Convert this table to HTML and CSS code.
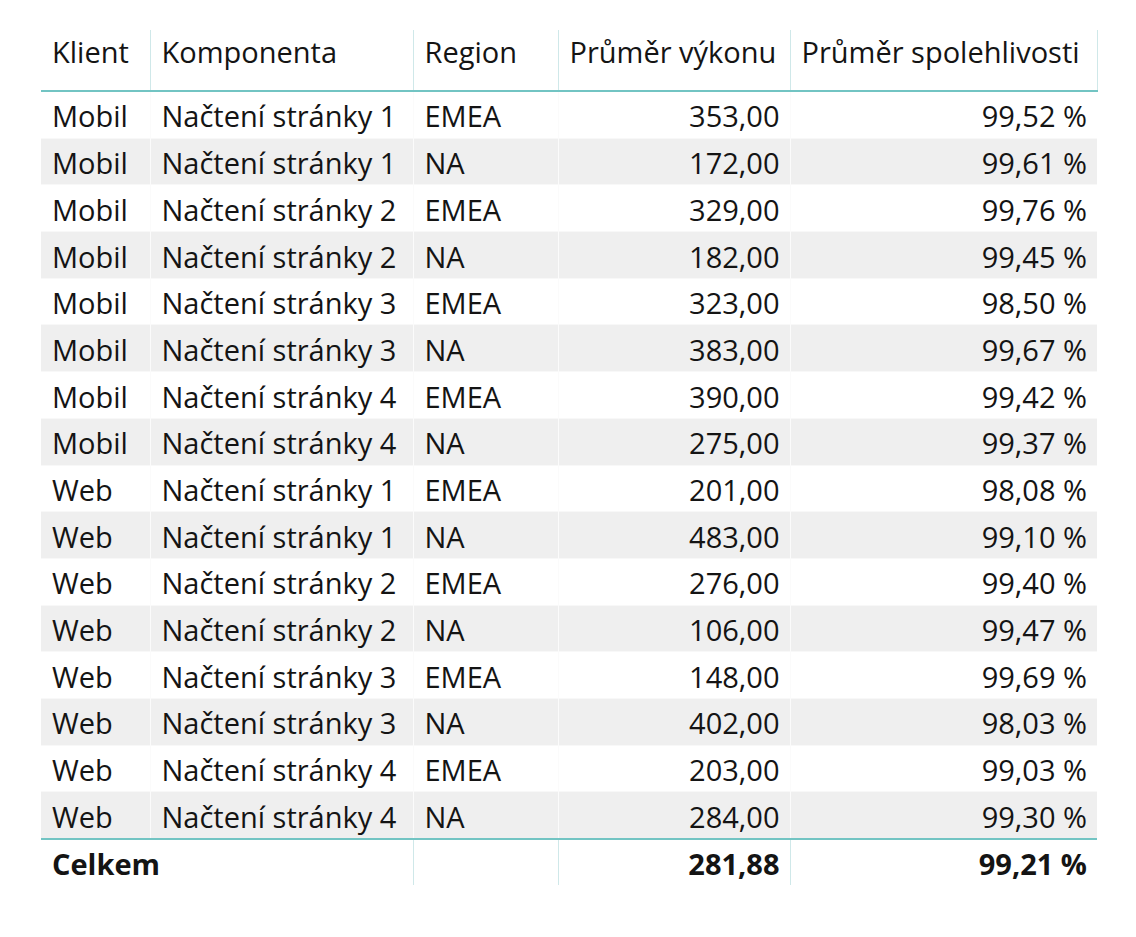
FILE: index.html
```html
<!DOCTYPE html>
<html lang="cs">
<head>
<meta charset="utf-8">
<link rel="stylesheet" href="styles.css">
</head>
<body>
<table class="grid">
  <colgroup>
    <col class="c1"><col class="c2"><col class="c3"><col class="c4"><col class="c5">
  </colgroup>
  <thead>
    <tr><th>Klient</th><th>Komponenta</th><th>Region</th><th>Průměr výkonu</th><th>Průměr spolehlivosti</th></tr>
  </thead>
  <tbody>
    <tr><td>Mobil</td><td>Načtení stránky 1</td><td>EMEA</td><td class="num">353,00</td><td class="num">99,52 %</td></tr>
    <tr><td>Mobil</td><td>Načtení stránky 1</td><td>NA</td><td class="num">172,00</td><td class="num">99,61 %</td></tr>
    <tr><td>Mobil</td><td>Načtení stránky 2</td><td>EMEA</td><td class="num">329,00</td><td class="num">99,76 %</td></tr>
    <tr><td>Mobil</td><td>Načtení stránky 2</td><td>NA</td><td class="num">182,00</td><td class="num">99,45 %</td></tr>
    <tr><td>Mobil</td><td>Načtení stránky 3</td><td>EMEA</td><td class="num">323,00</td><td class="num">98,50 %</td></tr>
    <tr><td>Mobil</td><td>Načtení stránky 3</td><td>NA</td><td class="num">383,00</td><td class="num">99,67 %</td></tr>
    <tr><td>Mobil</td><td>Načtení stránky 4</td><td>EMEA</td><td class="num">390,00</td><td class="num">99,42 %</td></tr>
    <tr><td>Mobil</td><td>Načtení stránky 4</td><td>NA</td><td class="num">275,00</td><td class="num">99,37 %</td></tr>
    <tr><td>Web</td><td>Načtení stránky 1</td><td>EMEA</td><td class="num">201,00</td><td class="num">98,08 %</td></tr>
    <tr><td>Web</td><td>Načtení stránky 1</td><td>NA</td><td class="num">483,00</td><td class="num">99,10 %</td></tr>
    <tr><td>Web</td><td>Načtení stránky 2</td><td>EMEA</td><td class="num">276,00</td><td class="num">99,40 %</td></tr>
    <tr><td>Web</td><td>Načtení stránky 2</td><td>NA</td><td class="num">106,00</td><td class="num">99,47 %</td></tr>
    <tr><td>Web</td><td>Načtení stránky 3</td><td>EMEA</td><td class="num">148,00</td><td class="num">99,69 %</td></tr>
    <tr><td>Web</td><td>Načtení stránky 3</td><td>NA</td><td class="num">402,00</td><td class="num">98,03 %</td></tr>
    <tr><td>Web</td><td>Načtení stránky 4</td><td>EMEA</td><td class="num">203,00</td><td class="num">99,03 %</td></tr>
    <tr><td>Web</td><td>Načtení stránky 4</td><td>NA</td><td class="num">284,00</td><td class="num">99,30 %</td></tr>
  </tbody>
  <tfoot>
    <tr><td colspan="2">Celkem</td><td></td><td class="num">281,88</td><td class="num last">99,21 %</td></tr>
  </tfoot>
</table>
</body>
</html>
```

FILE: styles.css
```css
html, body {
  margin: 0;
  background: #ffffff;
}
body {
  padding: 30px 0 0 41px;
  font-family: "Open Sans", "Noto Sans", sans-serif;
  color: #141414;
}
.grid {
  border-collapse: collapse;
  table-layout: fixed;
  width: 1056px;
  font-size: 29px;
  line-height: 1.2;
}
.c1 { width: 109px; }
.c2 { width: 263px; }
.c3 { width: 145px; }
.c4 { width: 232px; }
.c5 { width: 307px; }

.grid th, .grid td {
  padding: 0 10px 0 11px;
  white-space: nowrap;
  overflow: visible;
  font-weight: 400;
  text-align: left;
}
.grid .num { text-align: right; }

.grid thead th {
  height: 44px;
  padding-bottom: 16px;
  border-right: 1px solid #cfe8e9;
  border-bottom: 2px solid #72c4c3;
}

.grid tbody td {
  height: 41.7px;
  padding-top: 4px;
  border-top: 1px solid #f8f8f8;
  border-right: 1px solid #fbfbfb;
}
.grid tbody tr:first-child td { border-top: none; }
.grid tbody tr:nth-child(even) td { background: #efefef; }
.grid tbody tr:last-child td { border-bottom: 2px solid #72c4c3; }
.grid tbody td:last-child { border-right: none; }

.grid tfoot td {
  height: 42px;
  padding-top: 3px;
  font-weight: 700;
  border-right: 1px solid #cfe8e9;
}
.grid tfoot td.last { border-right: none; }
```
